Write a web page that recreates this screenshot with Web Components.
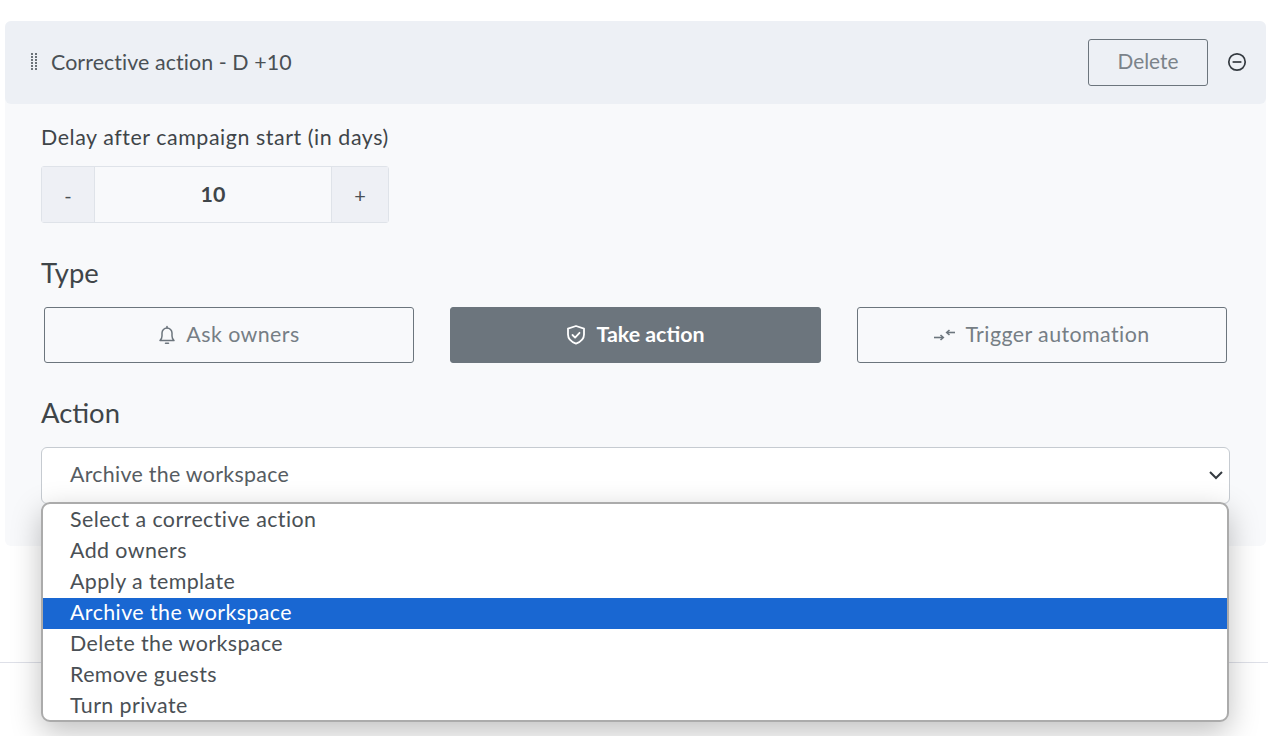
<!DOCTYPE html>
<html>
<head>
<meta charset="utf-8">
<title>Corrective action</title>
<style>
  html, body { margin: 0; padding: 0; height: 100%; background: #fff; overflow: hidden; }
  body { font-family: "Lato", "Open Sans", sans-serif; color: #3f4549; }
</style>
</head>
<body>
<template id="tpl-panel">
  <style>
    :host { display: block; margin: 21px 2px 0 5px; height: 525px; background: #f8f9fb; border-radius: 6px; }
    .head { display: flex; align-items: center; height: 83px; box-sizing: border-box; padding: 0 19px 0 25px; background: #edf0f5; border-radius: 6px; }
    .grip { width: 9px; height: 18px; margin: 0 12px 2px 0; flex: none; }
    .title { flex: 1; font-size: 21.4px; letter-spacing: .08px; color: #4a5055; margin-bottom: 2px; }
    .del { width: 120px; height: 47px; box-sizing: border-box; border: 1px solid #6c757d; border-radius: 3px; background: transparent; color: #7b838a; font: inherit; font-size: 20.8px; padding: 0 0 4px; margin-bottom: 1px; }
    .toggle { margin: 0 0 2px 19px; width: 20px; height: 20px; display: block; }
    .body { padding: 17px 36px 0; }
  </style>
  <div class="head">
    <svg class="grip" viewBox="0 0 9 18" fill="#6b7278">
      <rect x="1" y="0" width="2" height="2"/><rect x="5" y="0" width="2" height="2"/>
      <rect x="1" y="3" width="2" height="2"/><rect x="5" y="3" width="2" height="2"/>
      <rect x="1" y="6" width="2" height="2"/><rect x="5" y="6" width="2" height="2"/>
      <rect x="1" y="9" width="2" height="2"/><rect x="5" y="9" width="2" height="2"/>
      <rect x="1" y="12" width="2" height="2"/><rect x="5" y="12" width="2" height="2"/>
      <rect x="1" y="15" width="2" height="2"/><rect x="5" y="15" width="2" height="2"/>
    </svg>
    <span class="title"><slot name="title"></slot></span>
    <button class="del">Delete</button>
    <svg class="toggle" viewBox="0 0 20 20" fill="none" stroke="#343a40" stroke-width="1.7">
      <circle cx="10" cy="10" r="8.2"/><path d="M5.6 10h8.8"/>
    </svg>
  </div>
  <div class="body"><slot></slot></div>
</template>

<template id="tpl-stepper">
  <style>
    :host { display: flex; width: 348px; height: 57px; box-sizing: border-box; margin-top: 13px; border: 1px solid #dfe3e9; border-radius: 3px; color: #4a5055; }
    .btn { display: flex; align-items: center; justify-content: center; background: #eef0f5; font-size: 20px; }
    .minus { width: 52px; border-right: 1px solid #dfe3e9; }
    .plus { width: 56px; border-left: 1px solid #dfe3e9; }
    .val { flex: 1; display: flex; align-items: center; justify-content: center; font-size: 21.4px; font-weight: 700; color: #3f4549; padding-bottom: 2px; }
  </style>
  <div class="btn minus">-</div>
  <div class="val"><slot></slot></div>
  <div class="btn plus">+</div>
</template>

<template id="tpl-type">
  <style>
    :host { display: flex; align-items: center; justify-content: center; gap: 10px; height: 56px; box-sizing: border-box; border: 1px solid #6c757d; border-radius: 3px; color: #767e85; font-size: 21.4px; letter-spacing: .42px; }
    :host([active]) { background: #6c757d; color: #fff; font-weight: 700; letter-spacing: 0; }
    ::slotted(svg) { display: block; flex: none; }
    span { padding-bottom: 2px; }
  </style>
  <slot name="icon"></slot>
  <span><slot></slot></span>
</template>

<template id="tpl-select">
  <style>
    :host { display: block; position: relative; height: 57px; box-sizing: border-box; margin-top: 17px; width: 1189px; background: #fff; border: 1px solid #c6cbd1; border-radius: 6px; color: #565c62; font-size: 21.4px; letter-spacing: .28px; }
    .value { display: flex; align-items: center; height: 100%; box-sizing: border-box; padding: 0 0 4px 28px; }
    .chev { position: absolute; right: 5px; top: 20px; width: 16px; height: 14px; }
    .list { position: absolute; left: -1px; top: 54px; width: 1188px; height: 220px; box-sizing: border-box; background: #fff; border: 2px solid #ababab; border-radius: 9px; box-shadow: 0 10px 30px rgba(0,0,0,.25); overflow: hidden; padding-top: 1px; z-index: 5; letter-spacing: .42px; }
  </style>
  <div class="value"><slot name="value"></slot></div>
  <svg class="chev" viewBox="0 0 16 14" fill="none" stroke="#343a40" stroke-width="2"><path d="M2 4l6 6 6-6"/></svg>
  <div class="list"><slot></slot></div>
</template>

<template id="tpl-option">
  <style>
    :host { display: flex; align-items: center; height: 31px; box-sizing: border-box; padding: 0 0 3px 27px; color: #4a5055; }
    :host([selected]) { background: #1967d2; color: #fff; }
  </style>
  <slot></slot>
</template>

<template id="tpl-label">
  <style>
    :host { display: block; color: #3f4549; font-size: 21.4px; letter-spacing: .56px; line-height: 32px; }
    :host([big]) { font-size: 27.4px; letter-spacing: 0; line-height: 34px; }
  </style>
  <slot></slot>
</template>

<template id="tpl-types">
  <style>
    :host { display: grid; grid-template-columns: 370px 371px 370px; justify-content: space-between; width: 1183px; margin-left: 3px; margin-top: 17px; }
  </style>
  <slot></slot>
</template>

<template id="tpl-foot">
  <style>
    :host { display: block; margin-top: 116px; border-top: 1px solid #dee0e8; height: 73px; }
  </style>
</template>

<corrective-panel>
  <span slot="title">Corrective action - D +10</span>
  <field-label>Delay after campaign start (in days)</field-label>
  <delay-stepper>10</delay-stepper>
  <field-label big style="margin-top:33px">Type</field-label>
  <type-options>
    <type-button>
      <svg slot="icon" width="18" height="20" viewBox="0 0 18 20" fill="none" stroke="#6c757d" stroke-width="1.5" stroke-linejoin="round" stroke-linecap="round">
        <path d="M2 15.5c1.2-1.2 2-2 2-4.5V8a5 5 0 0 1 10 0v3c0 2.500.8 3.300 2 4.500z"/><path d="M7.500 18.300h3"/><path d="M9 3V1.500"/>
      </svg>
      Ask owners
    </type-button>
    <type-button active>
      <svg slot="icon" width="20" height="22" viewBox="0 0 20 22" fill="none" stroke="#fff" stroke-width="1.8" stroke-linejoin="round" stroke-linecap="round">
        <path d="M10 2l8 2.600v6c0 4.300-3.200 7.300-8 9-4.800-1.700-8-4.700-8-9v-6z"/><path d="M6.500 11l2.600 2.600 4.400-4.800"/>
      </svg>
      Take action
    </type-button>
    <type-button>
      <svg slot="icon" width="21" height="14" viewBox="0 0 21 14" fill="none" stroke="#6c757d" stroke-width="1.6">
        <path d="M0 9.500h9"/><path d="M6.500 7l2.800 2.500-2.800 2.500"/><path d="M21 4.500h-8"/><path d="M15.500 2l-2.800 2.500 2.800 2.500"/>
      </svg>
      Trigger automation
    </type-button>
  </type-options>
  <field-label big style="margin-top:33px">Action</field-label>
  <action-select>
    <span slot="value">Archive the workspace</span>
    <action-option>Select a corrective action</action-option>
    <action-option>Add owners</action-option>
    <action-option>Apply a template</action-option>
    <action-option selected>Archive the workspace</action-option>
    <action-option>Delete the workspace</action-option>
    <action-option>Remove guests</action-option>
    <action-option>Turn private</action-option>
  </action-select>
</corrective-panel>
<page-foot></page-foot>

<script>
  // every element just stamps its own template into an open shadow root
  const tags = {
    'corrective-panel': 'tpl-panel',
    'delay-stepper': 'tpl-stepper',
    'type-options': 'tpl-types',
    'type-button': 'tpl-type',
    'action-select': 'tpl-select',
    'action-option': 'tpl-option',
    'field-label': 'tpl-label',
    'page-foot': 'tpl-foot'
  };
  for (const tag in tags) {
    customElements.define(tag, class extends HTMLElement {
      constructor() {
        super();
        this.attachShadow({mode: 'open'});
        this.shadowRoot.appendChild(document.getElementById(tags[tag]).content.cloneNode(true));
      }
    });
  }
</script>
</body>
</html>
